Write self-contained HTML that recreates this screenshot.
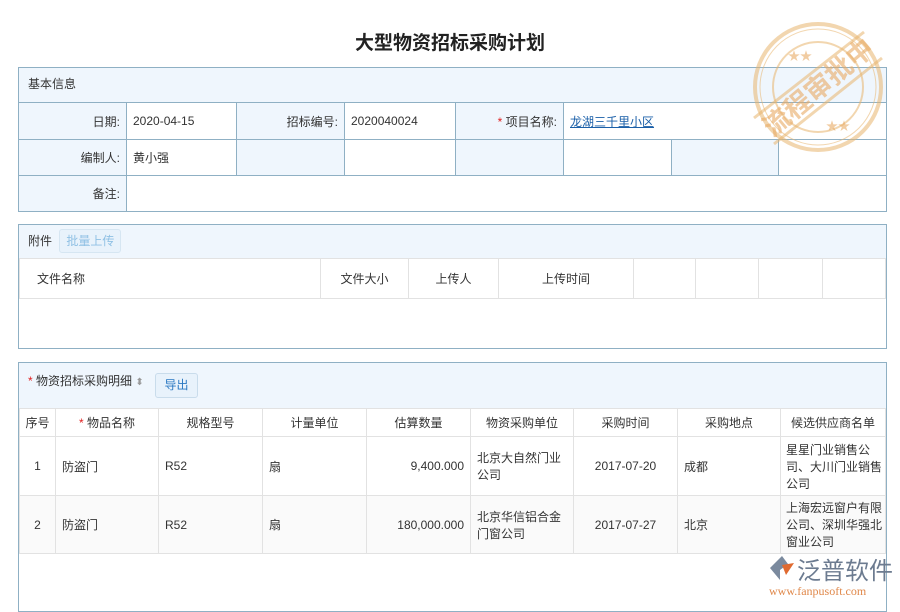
<!DOCTYPE html>
<html><head><meta charset="utf-8"><style>
*{box-sizing:border-box;margin:0;padding:0}
body{width:900px;height:600px;background:#fff;font-family:"Liberation Sans","Noto Sans CJK SC",sans-serif;font-size:12px;color:#333;position:relative;overflow:hidden}
.abs{position:absolute}
h1{position:absolute;top:28px;left:0;width:900px;text-align:center;font-size:19px;font-weight:bold;color:#222}
.box{position:absolute;left:18px;width:869px;border:1px solid #8fb0c4}
.hd{background:#eff6fd;border-bottom:1px solid #8fb0c4}
table{border-collapse:collapse;position:absolute;table-layout:fixed}
td{border:1px solid #8fb0c4;padding:0 6px}
.l{background:#eff6fd;text-align:right}
.t2 td{border:1px solid #e2e2e2}
.red{color:#e02020}
</style></head><body>
<h1>大型物资招标采购计划</h1>

<div class="box" style="top:67px;height:145px">
 <div class="hd" style="height:35px;line-height:33px;padding-left:9px">基本信息</div>
</div>
<table style="left:18px;top:102px;width:869px">
<tr style="height:37px"><td class="l" style="width:108px">日期:</td><td style="width:110px">2020-04-15</td><td class="l" style="width:108px">招标编号:</td><td style="width:111px">2020040024</td><td class="l" style="width:108px"><span class="red">*</span> 项目名称:</td><td colspan="3"><span style="color:#1a5fa8;text-decoration:underline">龙湖三千里小区</span></td></tr>
<tr style="height:36px"><td class="l">编制人:</td><td>黄小强</td><td class="l"></td><td></td><td class="l"></td><td style="width:107px"></td><td class="l" style="width:108px"></td><td></td></tr>
<tr style="height:36px"><td class="l">备注:</td><td colspan="7"></td></tr>
</table>

<div class="box" style="top:224px;height:125px">
 <div class="hd" style="height:34px;padding-left:9px;line-height:32px;border-bottom-color:#dde3e8">附件 <span style="display:inline-block;margin-left:4px;height:24px;line-height:22px;padding:0 6px;border:1px solid #d6e6f2;border-radius:3px;background:#e8f2fb;color:#8fc0e4">批量上传</span></div>
</div>
<table class="t2" style="left:19px;top:258px;width:867px">
<tr style="height:40px"><td style="width:301px;padding-left:17px">文件名称</td><td style="width:88px;text-align:center">文件大小</td><td style="width:90px;text-align:center">上传人</td><td style="width:135px;text-align:center">上传时间</td><td style="width:62px"></td><td style="width:63px"></td><td style="width:64px"></td><td></td></tr>
</table>

<div class="box" style="top:362px;height:250px">
 <div class="hd" style="height:46px;padding-left:9px;border-bottom-color:#dde3e8;position:relative">
  <span class="abs" style="top:9px;left:9px"><span class="red">*</span> 物资招标采购明细 <span style="color:#999;font-size:10px">⬍</span></span>
  <span class="abs" style="top:10px;left:136px;width:43px;height:25px;line-height:23px;text-align:center;border:1px solid #c9dceb;border-radius:3px;background:#e8f2fb;color:#2a78c2">导出</span>
 </div>
</div>
<table class="t2" style="left:19px;top:408px;width:867px">
<tr style="height:28px;text-align:center"><td style="width:36px;padding:0">序号</td><td style="width:103px"><span class="red">*</span> 物品名称</td><td style="width:104px">规格型号</td><td style="width:104px">计量单位</td><td style="width:104px">估算数量</td><td style="width:103px">物资采购单位</td><td style="width:104px">采购时间</td><td style="width:103px">采购地点</td><td style="padding:0 2px">候选供应商名单</td></tr>
<tr style="height:59px"><td style="text-align:center">1</td><td>防盗门</td><td>R52</td><td>扇</td><td style="text-align:right">9,400.000</td><td style="padding-right:2px">北京大自然门业公司</td><td style="text-align:center">2017-07-20</td><td>成都</td><td style="padding:0 0 0 5px">星星门业销售公司、大川门业销售公司</td></tr>
<tr style="height:58px;background:#fafafa"><td style="text-align:center">2</td><td>防盗门</td><td>R52</td><td>扇</td><td style="text-align:right">180,000.000</td><td style="padding-right:2px">北京华信铝合金门窗公司</td><td style="text-align:center">2017-07-27</td><td>北京</td><td style="padding:0 0 0 5px">上海宏远窗户有限公司、深圳华强北窗业公司</td></tr>
</table>

<svg class="abs" style="left:752px;top:20px" width="132" height="134" viewBox="0 0 132 134">
<g fill="none" stroke="rgba(232,180,110,0.55)">
<circle cx="66" cy="67" r="63" stroke-width="4"/><circle cx="66" cy="67" r="58" stroke-width="1"/><circle cx="66" cy="67" r="45" stroke-width="2"/>
<line x1="2" y1="98" x2="112" y2="12" stroke-width="3"/><line x1="22" y1="124" x2="130" y2="38" stroke-width="3"/>
</g>
<text x="66" y="77" transform="rotate(-40 66 67)" text-anchor="middle" font-size="27" font-weight="bold" fill="rgba(232,170,100,0.6)" font-family="Noto Sans CJK SC">流程审批中</text>
<text x="36" y="40" fill="rgba(232,170,100,0.6)" font-size="12">★★</text><text x="74" y="110" fill="rgba(232,170,100,0.6)" font-size="12">★★</text>
</svg>

<div class="abs" style="left:766px;top:552px;width:130px">
 <svg class="abs" style="left:2px;top:3px" width="28" height="26" viewBox="0 0 28 26"><path d="M14 1 L2 13 L12 25 L12 15 L20 9 Z" fill="#7b8a9e"/><path d="M14 10 L26 8 L18 20 Z" fill="#e06a30"/></svg>
 <span class="abs" style="left:31px;top:-1px;font-size:24px;color:#6c7b90;white-space:nowrap">泛普软件</span>
 <span class="abs" style="left:3px;top:32px;font-size:12px;color:#e0884a;font-family:'Liberation Serif',serif;white-space:nowrap">www.fanpusoft.com</span>
</div>
</body></html>
